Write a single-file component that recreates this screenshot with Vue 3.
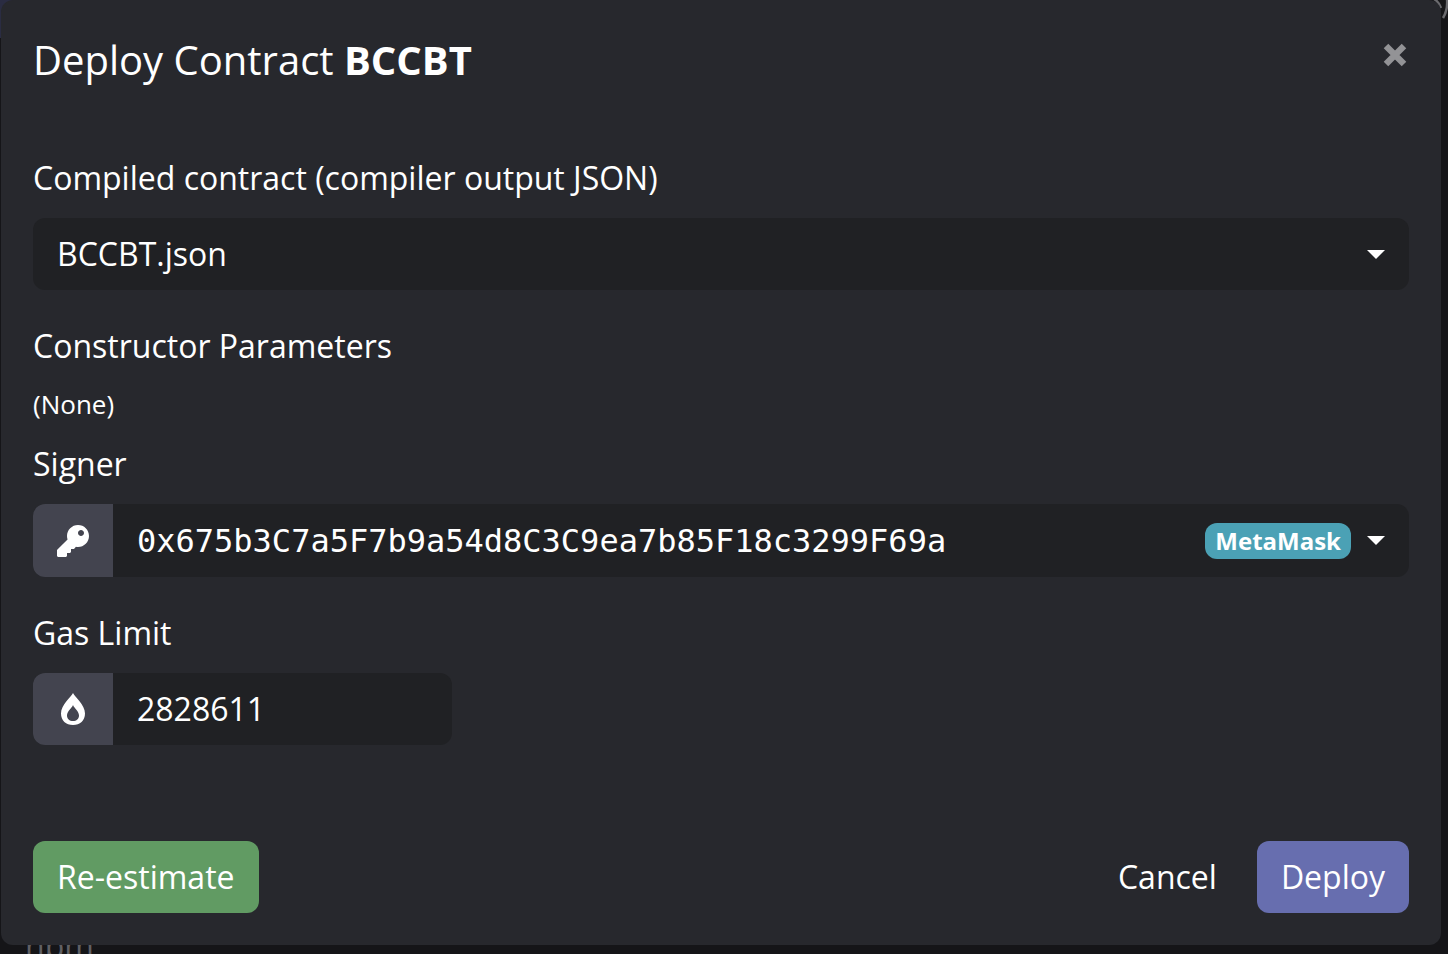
<script setup>
import { ref } from 'vue'

const contract = ref('BCCBT.json')
const signer = ref('0x675b3C7a5F7b9a54d8C3C9ea7b85F18c3299F69a')
const gasLimit = ref('2828611')
</script>

<template>
  <div class="page">
    <div class="tab-strip"></div>
    <svg class="ring" width="20" height="24" viewBox="0 0 20 24" aria-hidden="true">
      <path d="M6 -1 Q11 2 13 8 M19 -1 Q20 10 15 18" fill="none" stroke="#6a6a6e" stroke-width="2.500" />
    </svg>
    <span class="behind">npm</span>
    <form class="modal" role="dialog" aria-labelledby="dialog-title" @submit.prevent>
      <header class="modal-header">
        <h1 id="dialog-title">Deploy Contract <b>BCCBT</b></h1>
        <button class="close" type="button" aria-label="Close">
          <svg width="24" height="24" viewBox="0 0 24 24">
            <path d="M3 3 L21 21 M21 3 L3 21" stroke="currentColor" stroke-width="6.400" />
          </svg>
        </button>
      </header>

      <main class="modal-body">
        <div class="group">
          <label for="contract">Compiled contract (compiler output JSON)</label>
          <div class="field">
            <select id="contract" v-model="contract">
              <option>BCCBT.json</option>
            </select>
            <span class="adornment"><i class="caret"></i></span>
          </div>
        </div>

        <section class="params">
          <h2>Constructor Parameters</h2>
          <p>(None)</p>
        </section>

        <div class="group">
          <label for="signer">Signer</label>
          <div class="field tall">
            <span class="prefix">
              <svg width="32" height="32" viewBox="0 0 512 512">
                <path fill="currentColor" d="M512 176.001C512 273.203 433.202 352 336 352c-11.22 0-22.19-1.062-32.827-3.069l-24.012 27.014A23.999 23.999 0 0 1 261.223 384H224v40c0 13.255-10.745 24-24 24h-40v40c0 13.255-10.745 24-24 24H24c-13.255 0-24-10.745-24-24v-78.059c0-6.365 2.529-12.47 7.029-16.971l161.802-161.802C163.108 213.814 160 195.271 160 176 160 78.798 238.797.001 335.999 0 433.488-.001 512 78.511 512 176.001zM336 128c0 26.51 21.49 48 48 48s48-21.49 48-48-21.49-48-48-48-48 21.49-48 48z" />
              </svg>
            </span>
            <select id="signer" v-model="signer" class="mono">
              <option>0x675b3C7a5F7b9a54d8C3C9ea7b85F18c3299F69a</option>
            </select>
            <span class="adornment">
              <span class="badge">MetaMask</span>
              <i class="caret"></i>
            </span>
          </div>
        </div>

        <div class="group">
          <label for="gas">Gas Limit</label>
          <div class="field short">
            <span class="prefix">
              <svg width="32" height="32" viewBox="0 0 32 32">
                <path fill="currentColor" fill-rule="evenodd" d="M16 0C14 4 4 12 4 20.500C4 27.500 9 32 16 32C23 32 28 27.500 28 20.500C28 12 18 4 16 0ZM16 12C17 15 22 18 22 22.500C22 26 19.500 28 16 28C12.500 28 10 26 10 22.500C10 18 15 15 16 12Z" />
              </svg>
            </span>
            <input id="gas" v-model="gasLimit" type="text" inputmode="numeric" />
          </div>
        </div>
      </main>

      <footer class="modal-footer">
        <button class="btn green" type="button">Re-estimate</button>
        <span class="spacer"></span>
        <button class="btn plain" type="button">Cancel</button>
        <button class="btn violet" type="submit">Deploy</button>
      </footer>
    </form>
  </div>
</template>

<style>
body {
  background: #151518;
}
</style>

<style scoped>
* {
  box-sizing: border-box;
}
.page {
  position: relative;
  height: 100vh;
  overflow: hidden;
  padding: 0 7px 0 1px;
  color: #fff;
  font-family: "Open Sans", sans-serif;
  font-size: 32px;
  line-height: 48px;
}
.tab-strip {
  position: absolute;
  left: 0;
  top: 0;
  width: 24px;
  height: 38px;
  background: #2a2c42;
}
.ring {
  position: absolute;
  right: 0;
  top: 0;
}
.behind {
  position: absolute;
  left: 25px;
  bottom: -16px;
  color: #606064;
}
.modal {
  position: relative;
  background: #27282d;
  border-radius: 12px;
  padding: 30px 32px 32px;
}
.modal-header {
  display: flex;
  justify-content: space-between;
  align-items: flex-start;
  margin-bottom: 64px;
}
h1 {
  margin: 0;
  font-size: 40px;
  line-height: 60px;
  font-weight: 400;
}
b {
  font-weight: 700;
}
button {
  border: 0;
  font: inherit;
  color: inherit;
  cursor: pointer;
}
.close {
  display: flex;
  padding: 13px 2px;
  background: none;
  color: #939396;
}
.group {
  margin-bottom: 32px;
}
label,
h2 {
  display: block;
  margin: 0 0 16px;
  font-size: 32px;
  font-weight: 400;
  line-height: 48px;
}
.params {
  margin-bottom: 18px;
}
.params p {
  margin: 0;
  font-size: 26px;
  line-height: 36px;
}
.field {
  position: relative;
  display: flex;
  min-height: 72px;
  border-radius: 12px;
  background: #202124;
  overflow: hidden;
}
.tall {
  min-height: 73px;
}
.short {
  width: 419px;
}
.prefix {
  display: flex;
  align-items: center;
  justify-content: center;
  flex: 0 0 80px;
  background: #43444f;
}
select,
input {
  flex: 1;
  min-width: 0;
  border: 0;
  padding: 12px 24px;
  margin: 0;
  appearance: none;
  background: transparent;
  color: #fff;
  font: inherit;
  outline: none;
}
.mono {
  font-family: "DejaVu Sans Mono", monospace;
}
.adornment {
  position: absolute;
  right: 24px;
  top: 0;
  bottom: 0;
  display: flex;
  align-items: center;
  gap: 16px;
  pointer-events: none;
}
.caret {
  border: 9px solid transparent;
  border-top-color: #fff;
  border-bottom: 0;
}
.badge {
  padding: 0 10px;
  border-radius: 12px;
  background: #4ba1b5;
  font-size: 24px;
  line-height: 36px;
  font-weight: 700;
}
.modal-footer {
  display: flex;
  gap: 16px;
  padding-top: 64px;
}
.spacer {
  flex: 1;
}
.btn {
  padding: 12px 24px;
  border-radius: 12px;
  line-height: 48px;
}
.green {
  background: #619b63;
}
.plain {
  background: transparent;
}
.violet {
  background: #676eaf;
}
</style>
